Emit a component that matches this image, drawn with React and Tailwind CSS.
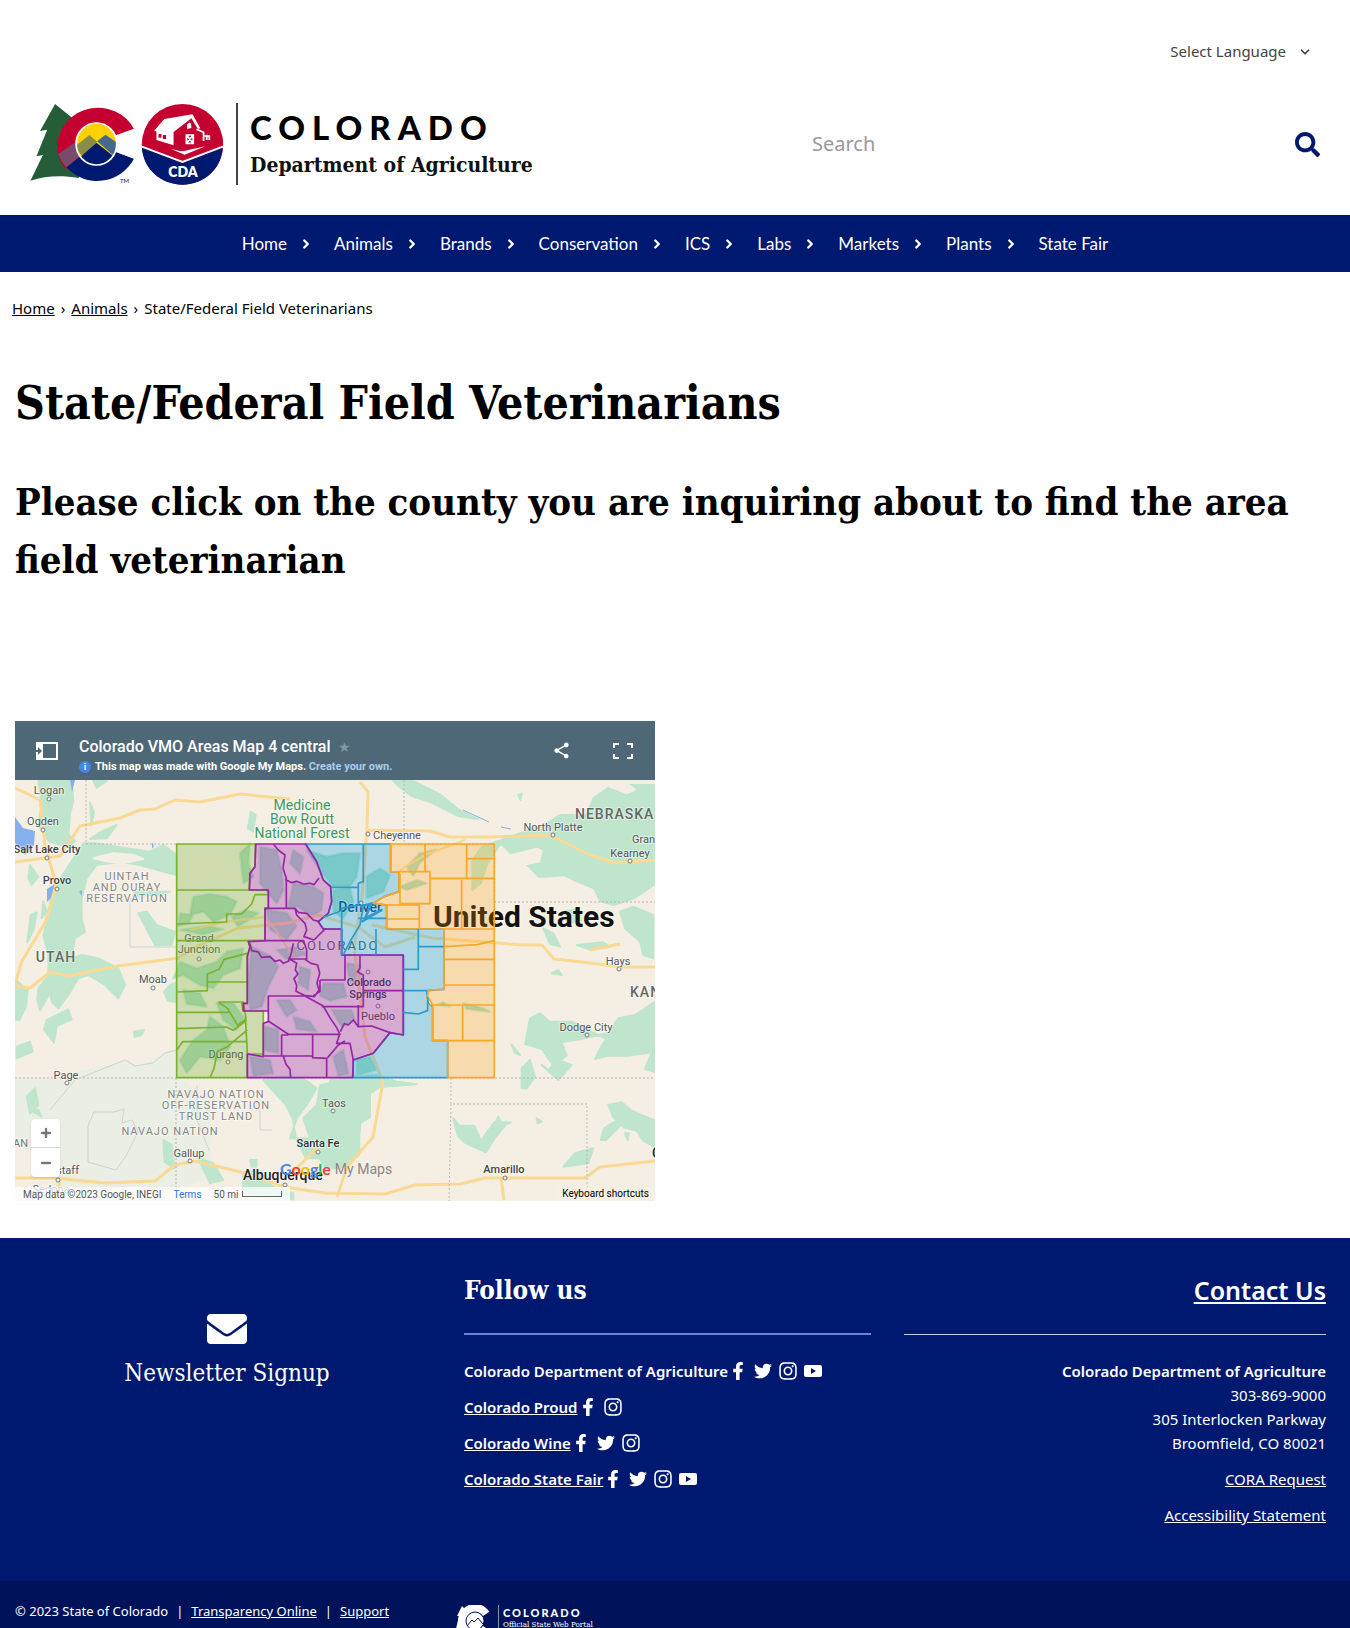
import React from "react";
import { FaSearch, FaEnvelope, FaFacebookF, FaTwitter, FaInstagram } from "react-icons/fa";
import { MdShare } from "react-icons/md";
import { ChevronDown, ChevronRight, Plus, Minus } from "lucide-react";

const slab = "font-['DejaVu_Serif_Condensed','DejaVu_Serif',serif]";

function StateEmblem() {
  return (
    <svg viewBox="31 23 194 82" className="h-[82px] w-[194px] shrink-0" aria-hidden="true">
      <g transform="scale(.357 .3333)">
        <path
          fill="#245d38"
          d="M157 72 115 153l20-4-30 80 18-4-35 77c45-16 90-16 135-8l30-60V153l-33 2 5-33-15-4z"
        />
        <path fill="#c3002f" d="M378 146A115 121 0 0 0 163 190c0 40 8 60 28 80l82-78 54-26z" />
        <path fill="#001970" d="M378 236A115 121 0 0 1 189 262l84-72 57 26z" />
        <path fill="#7b4a6b" d="M166 222a113 113 0 0 0 23 40l38-34-12-42z" />
        <ellipse cx="273" cy="192" rx="57" ry="62" fill="#ffd100" />
        <path fill="#8a8d4a" d="m217 196 36-31 22 20-40 44c-12-10-17-20-18-33z" />
        <path fill="#46688e" d="m275 184 23-20 30 22c4 14 0 30-8 40z" />
        <path fill="#001970" d="m229 230 44-42 47 40c-20 36-72 36-91 2z" />
        <ellipse cx="273" cy="192" rx="57" ry="63" fill="none" stroke="#fff" strokeWidth="5" />
        <path fill="#fff" d="m327 168 60-24v95l-60-23c7-16 7-32 0-48z" />
        <ellipse cx="514" cy="193" rx="114" ry="121" fill="#c3002f" />
        <path fill="#001970" d="m400 199 114 49 113-49c-2 67-51 115-113 115S402 266 400 199z" />
        <path fill="none" stroke="#fff" strokeWidth="6" d="m400 200 114 46 113-46" />
        <path fill="#fff" d="m434 153 29-36 79-14 22 42-7 2-18-32-50 41v40l-48-16v-26z" />
        <path fill="#c3002f" d="M447 162h8v11h-8zm12 3h9v12h-9zM493 162l45-43 18 32v38h-63z" />
        <path fill="none" stroke="#fff" strokeWidth="5" d="M525 165h19v25h-19zl19 25m0-25-19 25M553 148l20 9v26m0-15h16v12m-7-16v16" />
        <path fill="#fff" d="M527 133c8-9 12-6 12 11l-12 3zM482 207c22 6 34 9 48 3l48-11-58 25z" />
      </g>
      <text x="121" y="103" fontSize="6" fontFamily="Lato, sans-serif" fill="#111">TM</text>
      <text x="184" y="97" fontSize="14" fontWeight="800" textAnchor="middle" fontFamily="Lato, sans-serif" fill="#fff">CDA</text>
    </svg>
  );
}

function YoutubeIcon() {
  return (
    <svg viewBox="0 0 18 18" className="size-[18px]" aria-hidden="true">
      <path fill="#fff" d="M2 3h14q2 0 2 2v8q0 2-2 2H2q-2 0-2-2V5q0-2 2-2z" />
      <path fill="#001970" d="m7 6 5 3-5 3z" />
    </svg>
  );
}

const icons = {
  Facebook: <FaFacebookF className="size-[18px]" />,
  Twitter: <FaTwitter className="size-[18px]" />,
  Instagram: <FaInstagram className="size-5" />,
  YouTube: <YoutubeIcon />,
};

const navItems = ["Home", "Animals", "Brands", "Conservation", "ICS", "Labs", "Markets", "Plants", "State Fair"];

function Header() {
  return (
    <header className="flex h-[215px] flex-col px-[30px]">
      <div className="flex h-[103px] items-center justify-end pr-2">
        <button className="flex items-center gap-3 text-[15px] text-[#444]">
          Select Language <ChevronDown size={14} strokeWidth={3} />
        </button>
      </div>
      <div className="flex h-[82px] items-center">
        <a href="#home" className="flex w-1/2 items-center">
          <StateEmblem />
          <span className="ml-3 flex h-[82px] flex-col justify-between border-l-2 border-[#444] pl-3">
            <span className="mt-1 font-[Lato] text-[33px] leading-10 font-black tracking-[7px] text-black">COLORADO</span>
            <span className={`mb-1 text-[21px] leading-8 font-bold whitespace-nowrap text-[#111] ${slab}`}>
              Department of Agriculture
            </span>
          </span>
        </a>
        <form className="ml-auto flex w-[508px] items-center justify-between">
          <input
            aria-label="Search"
            placeholder="Search"
            className="min-w-0 grow bg-transparent text-xl outline-none placeholder:text-[#999]"
          />
          <button type="button" aria-label="Submit search" className="text-[#001970]">
            <FaSearch size={25} />
          </button>
        </form>
      </div>
    </header>
  );
}

function Nav() {
  return (
    <nav className="bg-[#001970] text-white">
      <ul className="flex h-[57px] items-center justify-center gap-[21px] font-[Lato] text-[17px]">
        {navItems.map((item, i) => (
          <li key={item} className="flex items-center gap-3">
            <a href={`#${item}`}>{item}</a>
            {i < navItems.length - 1 && <ChevronRight size={14} strokeWidth={4} />}
          </li>
        ))}
      </ul>
    </nav>
  );
}

/* text, x, baseline, size, colour, weight, tracking, anchor */
const labels = [
  ["Logan", 49, 794, 11, "#555", 400, 0, "middle"],
  ["Ogden", 43, 825, 11, "#555", 400, 0, "middle"],
  ["Salt Lake City", 47, 853, 11, "#444", 500, 0, "middle"],
  ["Provo", 57, 884, 11, "#444", 500, 0, "middle"],
  ["UINTAH", 127, 880, 11, "#858585", 400, 1, "middle"],
  ["AND OURAY", 127, 891, 11, "#858585", 400, 1, "middle"],
  ["RESERVATION", 127, 902, 11, "#858585", 400, 1, "middle"],
  ["UTAH", 56, 962, 14, "#666", 500, 1, "middle"],
  ["Medicine", 302, 810, 14, "#3b9a62", 400, 0, "middle"],
  ["Bow Routt", 302, 824, 14, "#3b9a62", 400, 0, "middle"],
  ["National Forest", 302, 838, 14, "#3b9a62", 400, 0, "middle"],
  ["Cheyenne", 373, 839, 11, "#555", 400, 0, "start"],
  ["NEBRASKA", 575, 819, 14, "#666", 500, 1, "start"],
  ["North Platte", 553, 831, 11, "#555", 400, 0, "middle"],
  ["Gran", 632, 843, 11, "#555", 400, 0, "start"],
  ["Kearney", 630, 857, 11, "#555", 400, 0, "middle"],
  ["United States", 433, 927, 30, "#111", 700, 0, "start"],
  ["Denver", 360, 912, 14, "#0c4176", 500, 0, "middle"],
  ["COLORADO", 338, 950, 13, "#555", 400, 2, "middle"],
  ["Grand", 199, 942, 11, "#555", 400, 0, "middle"],
  ["Junction", 199, 953, 11, "#555", 400, 0, "middle"],
  ["Moab", 153, 983, 11, "#555", 400, 0, "middle"],
  ["Colorado", 369, 986, 11, "#333", 500, 0, "middle"],
  ["Springs", 368, 998, 11, "#333", 500, 0, "middle"],
  ["Pueblo", 378, 1020, 11, "#444", 400, 0, "middle"],
  ["Durang", 226, 1058, 11, "#444", 400, 0, "middle"],
  ["Hays", 618, 965, 11, "#555", 400, 0, "middle"],
  ["KAN", 630, 997, 14, "#666", 500, 1, "start"],
  ["Dodge City", 586, 1031, 11, "#555", 400, 0, "middle"],
  ["Page", 66, 1079, 11, "#555", 400, 0, "middle"],
  ["NAVAJO NATION", 216, 1098, 11, "#858585", 400, 1, "middle"],
  ["OFF-RESERVATION", 216, 1109, 11, "#858585", 400, 1, "middle"],
  ["TRUST LAND", 216, 1120, 11, "#858585", 400, 1, "middle"],
  ["NAVAJO NATION", 170, 1135, 11, "#858585", 400, 1, "middle"],
  ["Gallup", 189, 1157, 11, "#555", 400, 0, "middle"],
  ["Santa Fe", 318, 1147, 11, "#333", 500, 0, "middle"],
  ["Taos", 334, 1107, 11, "#555", 400, 0, "middle"],
  ["Albuquerque", 243, 1180, 14, "#222", 500, 0, "start"],
  ["Flagstaff", 79, 1174, 11, "#555", 400, 0, "end"],
  ["AN", 13, 1147, 11, "#777", 400, 0, "start"],
  ["Sedona", 51, 1193, 11, "#555", 400, 0, "middle"],
  ["Amarillo", 504, 1173, 11, "#444", 500, 0, "middle"],
  ["Oklahoma City", 652, 1158, 14, "#222", 500, 0, "start"],
];

const towns = [
  [49, 799], [43, 830], [47, 858], [57, 889], [368, 834], [553, 835], [630, 861], [199, 959], [361, 903], [368, 972],
  [378, 1006], [153, 988], [228, 1062], [619, 969], [587, 1035], [67, 1083], [190, 1161], [318, 1152], [333, 1111],
  [285, 1185], [58, 1180], [505, 1178],
];

function MapDrawing() {
  return (
    <svg viewBox="15 780 640 421" className="block w-full" role="img" aria-label="Map of Colorado veterinary areas">
      <rect x="15" y="780" width="640" height="421" fill="#f5efe3" />
      <path
        fill="#eaeee4"
        d="M15 1078h35l78-18 12 7 25-14 11-2v27l35 20v80l-70 24H60l-10-45-35-10z"
      />
      <g fill="#bfe6cd" stroke="#bfe6cd" strokeWidth="6" strokeLinejoin="round">
        <g transform="translate(10 715) scale(.3333)">
          <path d="M85 198h100l5 60-10 40-5 60 20 20-20 20-60-20-30-50 10-60zM220 385h40l90 15 70 10 40-20 40 30v60l-40-10-70-20-60-10-70 10-30 40-15 60v60l10 40-30 20-10 60 30-10 50 10 60 30 20 50-20 40-40-40-50-30-30 10-30 50-30 40-20-20-10-60v-80l-15-60 15-60 10-70zM60 450l25 35-20 25-10-20zM62 600l18-8-8 50-20 40zM100 560l10 30-15 20zM240 262l12 30-8 40zM240 372l30-20 50-22-30 40zM250 198h40l-30 20zM722 290l15 10-8 50-15-10zM385 595l25-5 30 40 55 20-10 40-50 0zM370 530l110 0-20 8-80 4z" />
          <path d="M250 430l60-15 60 5 30 12-60 12-50-5z" fill="#f5efe3" stroke="#f5efe3" />
        </g>
        <g transform="translate(330 715) scale(.3333)">
          <path d="M190 198h60l80 40 55 45 60 30-60-10-80-40-60-20-40-30zM640 330l50-30 80 0 20-50 50-35 60-5 72 0v300l-60 40-60 20-40-10-20-40-50-20-40-20-50 5-60 0-40-10 30-20 50-10 10-40-20-10-80 20-30-30-40 60-20 60-25 20v-90l30-40zM870 590l40-15 60 25v130l-30-10-10-40-45-40zM640 640l30 15 20 40-30-8zM700 590l45-8 8 35-35 6zM740 690l80-8 20 14-60 8zM565 240l10-5-4 20z" />
          <path d="M500 440l50-8 30 15 40 40-20 15-50-10-45-25zM640 520l80 10 30 30-70-8zM840 215l50 20 25-12-30-20z" fill="#f5efe3" stroke="#f5efe3" />
        </g>
        <g transform="translate(10 960) scale(.3333)">
          <path d="M18 60l35 30-5 50-20 40-10 0zM85 85l35-45 15-50 50-5-15 70 0 20-50 25-30 50-8-30zM110 180l65-32 10 30-45 20-8 50-30-40zM20 260l40-15 8 30-48 20zM372 215l30-5-8 15-20 6zM462 95l18-20 18-8v60l-25-5zM50 410l25-25 10 50-25 25zM60 450l25 0 10 20zM760 360l60-10 60 5 40 30-30 50-30 40-20 60 60 0-20-60 40-40 10-60 118-20v230l-60 40-40 0-20-30-40 0-30-60-10-60-20-40zM700 640l30-10 60 50 60 20v18l-150-20zM460 540l25 15 8 70-30-20zM565 595l45 15 30 50-40 10zM720 600l20 0 0 20-15 0z" />
        </g>
        <g transform="translate(330 960) scale(.3333)">
          <path d="M0 360l60-10 80-5 60 20 60 8-110 8-30 20v70l-30 20 0 20-30 40-20 60-30 0-30-40zM600 175l30-15 30 25 65 0 100 50 40-60 50-10 90-60v240l-60-18 20-50-70 10-60 0-40 10 20-40 30-40-90 20-60 10 15 40-40 30-35-50-50-15zM545 255l25 30-15-6zM575 325l25-25 15 50-25 35-15 0zM635 315l20 15 30-30 40 15-40 45zM370 475l18 22 45 0 20 45 40-55 40 0-40 50-25 40-40-18-25-12-20-20zM480 520l25-50 12 25 25-8zM835 435l40-8 30 25 70 30v80l-35-20-20-30-40-10-30-30zM812 540l10-35 40-25 6 20-40 40zM700 620l35-40 55-15-15 45zM860 180zM665 40l20-10 10 15zM620 475l15 10-12 5zM885 520l12 0-4 20z" />
        </g>
      </g>
      <g fill="#7ed0a5" fillOpacity=".6" stroke="#7ed0a5" strokeOpacity=".3" strokeWidth="8" strokeLinejoin="round" transform="translate(160 830) scale(.3333)">
        <path d="M240 70l30-30-5 60 15 40-30 20zM100 200l50-8 50 8 30 15-20 40-50 20-30-30-40 10zM60 250l40 5-15 25-30 8zM215 260l40-20 40 10-60 40zM60 300l80-12 50 10-60 15zM60 395l50 20 60-20 30-30 50-10-10 60-50 20-30 40-40-10-50-30-30 10zM170 520l50 0 30 40-20 40-40-30zM150 560l40 30 20 60-30 40-60-10-40 50-20-40 40-60 40-30zM70 480l50 10 20 40-60-8zM275 350l60 30 20 30-30 60-20 60-35 10-5-80zM300 50l50 10 15 60 5 60-20 40-50-60zM320 240l60 8 30 40-30 40-50-30zM400 160l60 10 30 20-5 50-30 20-40-30-30 0zM400 60l30 20-10 50-30-30zM440 60l60 20 50-10 50 0-10 70-20 30-50 0-40-50zM520 180l50-5 10 40-30 50-30-20zM620 140l40-25 30 20-20 50-50 20zM420 410l30 10-5 60-30-20zM490 460l60 0 10 40-50 12-30-15zM350 510l40 0 20 30-30 20zM400 560l50 15 20 30-60-8zM515 540l60 0 10 30-40 20zM315 590l40 10 0 70-40-10zM270 680l60 10 10 40-60 8zM520 680l30-20 15 70-30 8zM590 690l40-10 20 40-60 15zM720 170l50-20 30 10-60 20zM740 110l40-40 50-12-50 40-20 40zM830 525l20-8 20 12zM910 520l60 15 20 10-70-8zM350 360l60-8 30 20-60 15zM560 400l40 5 0 60-30-10z" />
      </g>
      <path fill="#84b0ee" d="M15 817l8 11 12 3-1 14-9 10-10-12zM47 889l8-5-2 12-6 6zM70 780h5l-3 12zM152 842l2 4-2 3zM79 892l3-2v6z" />
      <g fill="none" stroke="#f9d994" strokeWidth="3" strokeLinejoin="round">
        <path d="M15 788l15 7 10 5 5 45 11 40-10 36-24 40-7 23M15 862l45-6 20-30 40-8 20-8 15-1 20-9 25 2 40-8 50 5M15 986l15 2 20-16 18 4 50-10 60-8 20-12 40-18 50-5 30-8 40 12 27 20 30-10M360 782l8 10-1 35-5 70-8 50 4 30 7 60 18 45-10 55-26 30-10 30M368 830l62 1 20 6h40l60-2 40 20 25 8 40-3M372 925l60 13 90 7 20 0 12 14 28 3 40 5 33 0M15 1178h40l50 5 50-2 20-16 20-4 50 12 40 14 40 6 60 1 30-9 45-1 25-6h100l15-11 55-6M501 1178l3 22M590 950l30-6M60 1180l-4 20M318 1147l-30 30" />
        <path d="M190 930l35-8 40-5 10 12 20 30M400 870l25-15 40-15" strokeWidth="2" />
      </g>
      <path fill="none" stroke="#8eaede" strokeWidth="1" d="M463 810l26 12m12 5 10 2" />
      <g fill="none" stroke="#b9b6b4" strokeWidth="1" strokeDasharray="2 2">
        <path d="M86 780v64h91M404 780v64h90v58h161M15 1078h640M176 1078v123M451 1078v26h136v80l3 17M451 1104l-2 97" />
      </g>
      <path fill="none" stroke="#cfd4d0" d="M50 1110l25-30 50-20 10 6 18-3 12-10 11-3M88 1162v-36l6-14h20l10-3-2 14 10-3 6 12-8 16-4 8-10 14zM130 900v47h46M197 1085v35l12 30M260 1110v20h12" />
      <g fill="#fff" stroke="#777">
        {towns.map(([x, y]) => (
          <circle key={`${x}-${y}`} cx={x} cy={y} r="2" />
        ))}
      </g>
      <g fontFamily="Roboto, sans-serif">
        {labels.map(([t, x, y, size, fill, weight, track, anchor]) => (
          <text
            key={`${t}-${y}`}
            x={x}
            y={y}
            fontSize={size}
            fill={fill}
            fontWeight={weight}
            letterSpacing={track}
            textAnchor={anchor}
            stroke="#fff"
            strokeWidth="2"
            strokeOpacity=".45"
            paintOrder="stroke"
          >
            {t}
          </text>
        ))}
      </g>
      <g transform="translate(160 830) scale(.3333)" strokeWidth="5" strokeLinejoin="round">
        <g fill="none" stroke="#79b32e">
          <path
            fill="#7cb342"
            fillOpacity=".33"
            d="M50 42h237l-2 68-15 20-2 50h57v55h-10v97h-50l5 23-8 20v145h-17l5 23h60v129h-48v71H50z"
          />
          <path d="M50 180h275M50 282l150-6v-24h45l30-30 10-28h40M50 332h265M262 370l-70 18-15 30-35 14v24h120M142 456v26l-92 4M175 516h75l8 50-25 20-30-50-28-20M50 547h160M50 596l150-5 20 10 40-30M50 660l18-25h194M262 600l-60 50-30 15-10 50-12 28M256 560l6 110" />
        </g>
        <path
          fill="#039be5"
          fillOpacity=".3"
          stroke="#2d9ccc"
          d="M437 42h255v83l25 2v58l-45 15-32 20 40 5v72h172v181l-52 4 5 38 13 10v102h45v111H580v-53l60-20 50-62 40 7V375H545v-78h-55l-15-22 30-25 10-35-3-45-22-20-20-55z"
        />
        <path
          fill="#ff9d0a"
          fillOpacity=".25"
          stroke="#f9a825"
          d="M692 42h311v701H863V632h-45V525l-15-25 2-20 47-2V297H680v-72l-40-5 32-20 45-15v-58l-25-2z"
        />
        <path
          fill="#9c27b0"
          fillOpacity=".34"
          stroke="#9626a6"
          d="M287 42h150l33 53 20 55 22 20 3 45-10 35-30 25 15 22h55v78h185v240l-40-7-50 62-60 20-2 53H262v-71l48 8V580l15-5v-32h-75v-23h12V380l8-30-5-15 50-3v-97h10v-55h-57l2-50 15-20z"
        />
        <g fill="none" stroke="#2d9ccc">
          <path d="M610 42v113l-15 5v65l-50 10v140M515 172h80M490 262l55-20M595 265h85M648 297v78M775 297v121h-45M775 350h77M730 482h70M730 547l45 5 28-10v-40M610 230l-10 55-30 50-20 40" />
          <path d="M600 230l35-10-20 45 50-25-60 35" strokeWidth="7" />
        </g>
        <g fill="none" stroke="#f9a825">
          <path d="M795 42v83h-78M795 125h15v96h-90v-90M920 42v103M920 86h83M810 145h193M905 150v147M680 225h98v72M680 267h98M778 221h32M852 297h151M852 350l100-6 51-12M852 388h151M852 465h151M805 525h198M908 525v107M818 632h185" />
        </g>
        <g fill="none" stroke="#9626a6">
          <path d="M340 42l15 18 20 15-6 40 10 30v90h-50M375 148l20 10 15-4 20 8 20-2 12 4 15-20M315 235h90l10 12 25 3 20 20 20 5M405 235l5 20 25 25 5 20-8 20 30 10 15-15 20-20M315 332h115M430 330l10 30v30M270 340l5 22 20 4 10 16 25-2 15 14 15-4 10 10 15-6 8-20 7-34M390 387h50M385 385l25 15-4 20 8 12-12 14 8 20-2 18 25 12 30 4 14-20-6-20 8-30-6-25-20-5-18-12M555 375v75h-75M600 375v40l-8 10 18 10v95H485M325 543v-45h110l55 30 20 35 20 30 10 20H385l-60-40M480 450v35l-20 12M610 482h120M595 525v65l-15-20-15 15-12-4-12 24M595 590l40-2 55 20M540 610l-10 30 40 0 10 50M385 615h-20v63h-55M458 615v68l45 2M503 683l32-38 20-12M365 678h93M370 678l8 25 12 15 2 25M500 685v58" />
        </g>
      </g>
    </svg>
  );
}

function MyMap() {
  return (
    <section className="relative w-[640px] max-w-full overflow-hidden font-[Roboto]" aria-label="Colorado VMO Areas Map">
      <div className="flex h-[59px] items-center bg-[#4e6877] pr-[22px] pl-5 text-white">
        <button aria-label="Toggle panel">
          <svg viewBox="0 0 24 20" className="h-5 w-6" aria-hidden="true">
            <path fill="none" stroke="#fff" strokeWidth="2" d="M2 2h20v16H2z" />
            <path fill="#fff" d="M1 1h7v18H1z" />
            <path fill="#4e6877" d="M0 9h3V6l4 4-4 4v-3H0z" />
          </svg>
        </button>
        <div className="ml-5 grow pt-[10px]">
          <div className="flex items-center gap-2 text-base leading-5 font-medium">
            Colorado VMO Areas Map 4 central <span className="text-sm text-[#8497a1]">★</span>
          </div>
          <div className="mt-[2px] flex items-center gap-1 text-[11px] leading-4 font-bold">
            <span className="flex size-3 items-center justify-center rounded-full bg-[#4284f3] text-[9px]">i</span>
            <span>
              This map was made with Google My Maps.{" "}
              <a href="#create" className="text-[#a4cfec]">Create your own.</a>
            </span>
          </div>
        </div>
        <button aria-label="Share" className="mr-[42px]"><MdShare size={19} /></button>
        <button aria-label="Full screen">
          <svg viewBox="0 0 20 16" className="h-4 w-5" fill="none" stroke="#fff" strokeWidth="2" aria-hidden="true">
            <path d="M1 5V1h5m8 0h5v4M1 11v4h5m8 0h5v-4" />
          </svg>
        </button>
      </div>
      <MapDrawing />
      <div className="absolute bottom-6 left-4 flex w-[29px] flex-col divide-y divide-gray-300 rounded-sm bg-white text-[#777] shadow">
        <button aria-label="Zoom in" className="flex h-[29px] items-center justify-center"><Plus size={14} strokeWidth={4} /></button>
        <button aria-label="Zoom out" className="flex h-[29px] items-center justify-center"><Minus size={14} strokeWidth={4} /></button>
      </div>
      <div className="absolute bottom-5 left-[265px] flex items-center gap-1 leading-4">
        <span className="font-[Lato] text-base font-bold">
          <span className="text-[#4285f4]">G</span><span className="text-[#ea4335]">o</span><span className="text-[#fbbc05]">o</span><span className="text-[#4285f4]">g</span><span className="text-[#34a853]">l</span><span className="text-[#ea4335]">e</span>
        </span>
        <span className="text-sm text-[#888]">My Maps</span>
      </div>
      <div className="absolute bottom-0 left-0 flex h-[14px] items-center gap-3 bg-white/75 px-2 text-[10px] text-[#555]">
        <span>Map data ©2023 Google, INEGI</span>
        <a href="#terms" className="text-[#2f6fe0]">Terms</a>
        <span className="flex items-center gap-1">50 mi <span className="h-[6px] w-10 border border-t-0 border-[#666]" /></span>
      </div>
      <button className="absolute right-0 bottom-0 h-[14px] bg-[#f5efe3]/80 px-[6px] text-[10px] leading-[14px] text-black">
        Keyboard shortcuts
      </button>
    </section>
  );
}

const social = [
  ["Colorado Department of Agriculture", false, ["Facebook", "Twitter", "Instagram", "YouTube"]],
  ["Colorado Proud", true, ["Facebook", "Instagram"]],
  ["Colorado Wine", true, ["Facebook", "Twitter", "Instagram"]],
  ["Colorado State Fair", true, ["Facebook", "Twitter", "Instagram", "YouTube"]],
];

function Footer() {
  return (
    <footer className="bg-[#001970] text-white">
      <div className="grid h-[343px] grid-cols-3">
        <a href="#newsletter" className={`flex flex-col items-center pt-[71px] pl-1 text-2xl ${slab}`}>
          <FaEnvelope size={40} />
          <span className="mt-2">Newsletter Signup</span>
        </a>
        <div className="pr-[29px] pl-[14px]">
          <h2 className={`pt-8 text-[26px] leading-10 font-bold ${slab}`}>Follow us</h2>
          <hr className="mt-[23px] border-t-2 border-[#6d83cf]" />
          <ul className="mt-6 space-y-3 text-[15px] leading-6 font-semibold">
            {social.map(([name, linked, list]) => (
              <li key={name} className="flex items-center whitespace-nowrap">
                {linked ? <a href={`#${name}`} className="underline">{name}</a> : <span>{name}</span>}
                <span className="flex items-center gap-[5px]">
                  {list.map((n) => (
                    <a key={n} href={`#${n}`} aria-label={`${name} on ${n}`} className="flex w-5 justify-center">{icons[n]}</a>
                  ))}
                </span>
              </li>
            ))}
          </ul>
        </div>
        <div className="pr-6 pl-1 text-right text-[15px] leading-6">
          <h2 className="pt-8 text-[25px] leading-10 font-semibold"><a href="#contact" className="underline">Contact Us</a></h2>
          <hr className="mt-6 mb-6 border-t border-[#c3cbe8]" />
          <p className="font-semibold">Colorado Department of Agriculture</p>
          <p>303-869-9000</p>
          <p>305 Interlocken Parkway</p>
          <p>Broomfield, CO 80021</p>
          <p className="mt-3"><a href="#cora" className="underline">CORA Request</a></p>
          <p className="mt-3"><a href="#accessibility" className="underline">Accessibility Statement</a></p>
        </div>
      </div>
      <div className="flex h-[47px] overflow-hidden bg-[#00135a]">
        <div className="flex w-1/3 items-start gap-2 pt-5 pl-[15px] text-[13px] leading-5 whitespace-nowrap">
          <span>© 2023 State of Colorado</span>
          <span>|</span>
          <a href="#transparency" className="underline">Transparency Online</a>
          <span>|</span>
          <a href="#support" className="underline">Support</a>
        </div>
        <a href="#portal" className="flex items-start gap-2 pt-6 pl-[5px]">
          <svg viewBox="0 0 35 28" className="h-7 w-[35px]" aria-hidden="true">
            <path fill="#fff" d="M7 1l-5 10h2L0 28h14V8z" />
            <path fill="none" stroke="#fff" strokeWidth="8" d="M31 9A13 13 0 1 0 31 23" />
            <circle cx="20" cy="16" r="9" fill="#fff" stroke="#00135a" />
            <path fill="none" stroke="#00135a" d="m12 21 5-6 2 2 4-4 5 6" />
          </svg>
          <span className="flex h-9 flex-col border-l border-[#8791b9] pl-1">
            <span className="font-[Lato] text-[11px] leading-[15px] font-black tracking-[2px]">COLORADO</span>
            <span className={`text-[8px] leading-[10px] whitespace-nowrap ${slab}`}>Official State Web Portal</span>
          </span>
        </a>
      </div>
    </footer>
  );
}

export default function App() {
  return (
    <div className="bg-white font-['Noto_Sans',sans-serif] text-black">
      <Header />
      <Nav />
      <main>
        <nav aria-label="Breadcrumb" className="flex items-center gap-[6px] px-3 pt-6 text-[15px] leading-6">
          <a href="#home" className="underline">Home</a>
          <span>›</span>
          <a href="#animals" className="underline">Animals</a>
          <span>›</span>
          <span>State/Federal Field Veterinarians</span>
        </nav>
        <div className="px-[15px] pb-[37px]">
          <h1 className={`mt-[53px] text-[46px] leading-[60px] font-bold ${slab}`}>State/Federal Field Veterinarians</h1>
          <h2 className={`mt-10 mb-[132px] text-[38px] leading-[58px] font-bold ${slab}`}>
            Please click on the county you are inquiring about to find the area field veterinarian
          </h2>
          <MyMap />
        </div>
      </main>
      <Footer />
    </div>
  );
}
